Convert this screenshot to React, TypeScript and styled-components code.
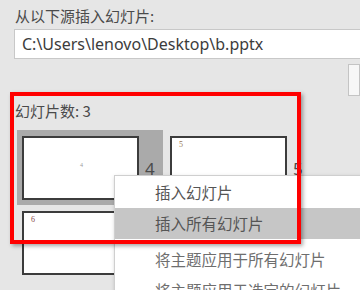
import React from "react";
import styled, { createGlobalStyle } from "styled-components";

const GlobalStyle = createGlobalStyle`
  html, body {
    margin: 0;
    padding: 0;
    background: #e6e6e6;
    overflow: hidden;
  }
  body {
    font-family: "Noto Sans", "Noto Sans CJK SC", sans-serif;
  }
`;

const Page = styled.div`
  position: relative;
  width: 360px;
  height: 290px;
  overflow: hidden;
  background: #e6e6e6;
  padding-top: 6px;
  box-sizing: border-box;
  display: flex;
  flex-direction: column;
`;

const Label = styled.div<{ $top?: number }>`
  margin-left: 15px;
  margin-top: ${(p) => p.$top ?? 0}px;
  height: 20px;
  line-height: 20px;
  font-size: 15px;
  color: #4a4a4a;
  font-family: "Noto Sans CJK SC", sans-serif;
  white-space: nowrap;
`;

const PathInput = styled.div`
  margin-top: 3px;
  margin-left: 14px;
  width: 360px;
  height: 30px;
  box-sizing: border-box;
  background: #ffffff;
  border: 1px solid #c8c8c8;
  padding-left: 7px;
  line-height: 28px;
  font-size: 16px;
  color: #3c3c3c;
  font-family: "Noto Sans", "Open Sans", sans-serif;
  white-space: nowrap;
`;

const ButtonRow = styled.div`
  margin-top: 5px;
  height: 32px;
  display: flex;
`;

const SideButton = styled.div`
  margin-left: 348px;
  width: 20px;
  height: 32px;
  box-sizing: border-box;
  background: #f7f7f7;
  border: 1px solid #c4c4c4;
`;

const SlideGrid = styled.div`
  margin-top: 9px;
  margin-left: 17px;
  display: grid;
  grid-template-columns: 146px 146px;
  column-gap: 2px;
`;

const Tile = styled.div<{ $selected?: boolean }>`
  height: 75px;
  box-sizing: border-box;
  padding: 6px 0 5px 5px;
  display: flex;
  align-items: center;
  background: ${(p) => (p.$selected ? "#aaaaaa" : "transparent")};
`;

const Thumb = styled.div`
  position: relative;
  width: 117px;
  height: 64px;
  box-sizing: border-box;
  background: #ffffff;
  border: 2px solid #3c3c3c;
  flex: none;
`;

const ThumbMark = styled.span<{ $corner?: boolean; $color: string }>`
  position: absolute;
  font-family: "Liberation Serif", serif;
  color: ${(p) => p.$color};
  font-size: ${(p) => (p.$corner ? 8 : 6)}px;
  line-height: 1;
  ${(p) =>
    p.$corner
      ? "left: 7px; top: 3px;"
      : "left: 56px; top: 24px;"}
`;

const SlideNumber = styled.span`
  margin-left: 6px;
  font-size: 17px;
  color: #4a4a4a;
  font-family: "Noto Sans", sans-serif;
`;

const Menu = styled.div`
  position: absolute;
  left: 114px;
  top: 175px;
  width: 260px;
  height: 130px;
  box-sizing: border-box;
  background: #ffffff;
  border: 1px solid #cfcfcf;
  box-shadow: 1px 2px 4px rgba(0, 0, 0, 0.25);
  padding-top: 1px;
  display: flex;
  flex-direction: column;
`;

const MenuItem = styled.div<{ $active?: boolean; $muted?: boolean; $gapTop?: number }>`
  height: 31px;
  flex: none;
  margin-top: ${(p) => p.$gapTop ?? 0}px;
  padding-left: 40px;
  line-height: 31px;
  font-size: 15.5px;
  font-family: "Noto Sans CJK SC", sans-serif;
  color: ${(p) => (p.$muted ? "#6e6e6e" : "#555555")};
  background: ${(p) => (p.$active ? "#c6c6c6" : "transparent")};
  white-space: nowrap;
`;

const Annotation = styled.div`
  position: absolute;
  left: 10px;
  top: 92px;
  width: 291px;
  height: 152px;
  box-sizing: border-box;
  border: 4px solid #ff0000;
  box-shadow: 2px 2px 4px rgba(0, 0, 0, 0.35);
  pointer-events: none;
`;

const slides = [
  { num: "4", mark: "4", corner: false, color: "#9a9a9a", selected: true },
  { num: "5", mark: "5", corner: true, color: "#9a7a55", selected: false },
  { num: "6", mark: "6", corner: true, color: "#8a4a4a", selected: false },
];

export default function App() {
  return (
    <>
      <GlobalStyle />
      <Page>
        <Label>从以下源插入幻灯片:</Label>
        <PathInput>C:\Users\lenovo\Desktop\b.pptx</PathInput>
        <ButtonRow>
          <SideButton />
        </ButtonRow>
        <Label $top={5}>幻灯片数: 3</Label>
        <SlideGrid>
          {slides.map((s) => (
            <Tile key={s.num} $selected={s.selected}>
              <Thumb>
                <ThumbMark $corner={s.corner} $color={s.color}>
                  {s.mark}
                </ThumbMark>
              </Thumb>
              <SlideNumber>{s.num}</SlideNumber>
            </Tile>
          ))}
        </SlideGrid>
        <Menu>
          <MenuItem>插入幻灯片</MenuItem>
          <MenuItem $active>插入所有幻灯片</MenuItem>
          <MenuItem $muted $gapTop={5}>将主题应用于所有幻灯片</MenuItem>
          <MenuItem $muted>将主题应用于选定的幻灯片</MenuItem>
        </Menu>
        <Annotation />
      </Page>
    </>
  );
}
